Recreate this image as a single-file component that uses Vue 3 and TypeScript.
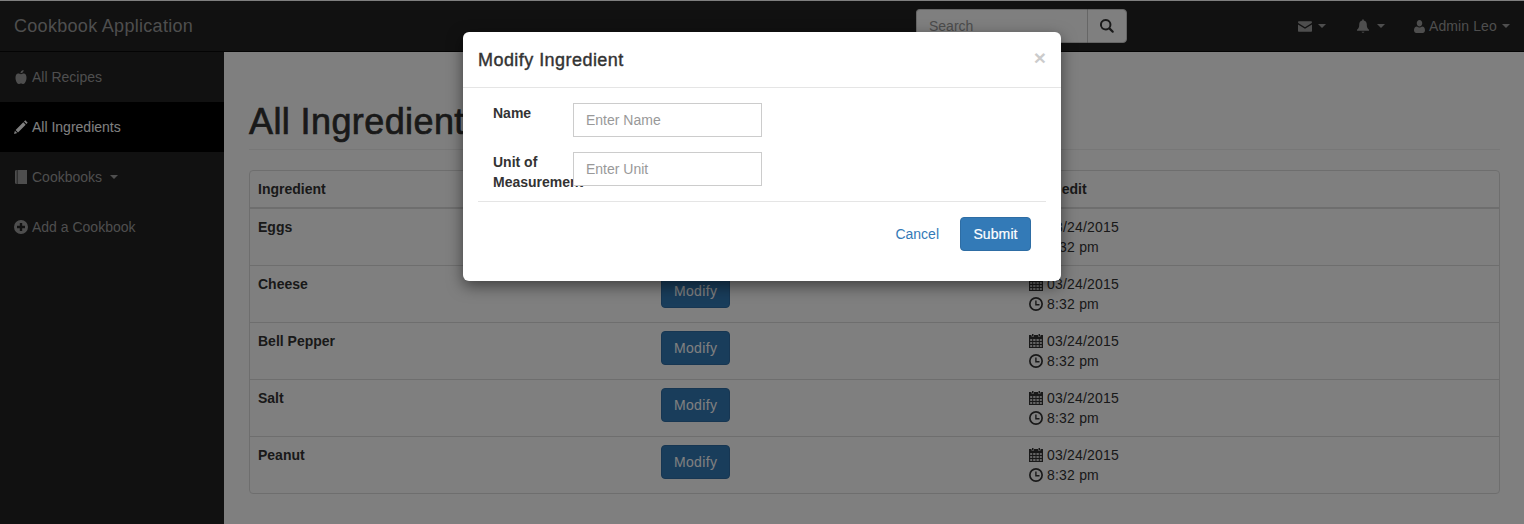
<template>
  <div class="page">
    <nav class="navbar">
      <a class="brand">Cookbook Application</a>
      <div class="search">
        <input class="search-input" placeholder="Search" />
        <button class="search-btn">
          <svg class="ic search-ic" viewBox="0 0 16 16"><path :d="icons.search" /></svg>
        </button>
      </div>
      <ul class="top-links">
        <li class="envelope-link">
          <svg class="ic env" viewBox="0 0 16 14"><path :d="icons.envelope" /></svg><span class="caret"></span>
        </li>
        <li class="bell-link">
          <svg class="ic bell" viewBox="0 0 14 16"><path :d="icons.bell" /></svg><span class="caret"></span>
        </li>
        <li class="user-link">
          <svg class="ic user" viewBox="0 0 12 14"><path :d="icons.user" /></svg>
          <span class="user-name">Admin Leo</span><span class="caret"></span>
        </li>
      </ul>
    </nav>

    <div class="layout">
      <aside class="sidebar">
        <a v-for="item in sideItems" :key="item.label" class="side-item" :class="{ active: item.active }">
          <svg class="ic side-ic" viewBox="0 0 14 14"><path :d="item.path" /></svg>
          <span>{{ item.label }}</span>
          <span v-if="item.dropdown" class="caret side-caret"></span>
        </a>
      </aside>

      <main class="content">
        <h1 class="page-title">All Ingredients</h1>
        <div class="panel">
          <table class="table">
            <colgroup>
              <col class="col-name" />
              <col class="col-action" />
              <col />
            </colgroup>
            <thead>
              <tr>
                <th>Ingredient</th>
                <th></th>
                <th>Last edit</th>
              </tr>
            </thead>
            <tbody>
              <tr v-for="name in ingredients" :key="name">
                <td><strong>{{ name }}</strong></td>
                <td><button class="btn btn-primary">Modify</button></td>
                <td>
                  <div class="stamp">
                    <svg class="ic stamp-ic" viewBox="0 0 14 14"><path :d="icons.calendar" /></svg>03/24/2015
                  </div>
                  <div class="stamp">
                    <svg class="ic stamp-ic" viewBox="0 0 14 14"><path :d="icons.clock" /></svg>8:32 pm
                  </div>
                </td>
              </tr>
            </tbody>
          </table>
        </div>
      </main>
    </div>

    <div class="backdrop"></div>

    <div class="modal">
      <div class="modal-header">
        <h4>Modify Ingredient</h4>
        <span class="close">×</span>
      </div>
      <form class="modal-form" @submit.prevent>
        <div class="form-row">
          <label>Name</label>
          <input class="field" placeholder="Enter Name" />
        </div>
        <div class="form-row">
          <label>Unit of Measurement</label>
          <input class="field" placeholder="Enter Unit" />
        </div>
      </form>
      <div class="modal-footer">
        <a class="cancel">Cancel</a>
        <button class="btn btn-primary">Submit</button>
      </div>
    </div>
  </div>
</template>

<script setup lang="ts">
const icons = {
  search: 'M6.5 0a6.5 6.5 0 1 0 3.6 11.9l3.6 3.6a1.3 1.3 0 0 0 1.8-1.8l-3.6-3.6A6.5 6.5 0 0 0 6.5 0zm0 2.2a4.3 4.3 0 1 1 0 8.6 4.3 4.3 0 0 1 0-8.6z',
  envelope: 'M1.2 1h13.6c.6 0 1.2.5 1.2 1.1 0 .5-.3.9-.7 1.2L8 7.8.7 3.3C.3 3 0 2.6 0 2.1 0 1.5.6 1 1.2 1zM0 4.6l8 5 8-5v7.2c0 .7-.5 1.2-1.2 1.2H1.2C.5 13 0 12.5 0 11.8z',
  bell: 'M7 0c.5 0 .9.4.9.9v.6c2.2.4 3.5 2.2 3.5 4.5 0 3.3.6 5 2.6 6.5v1H0v-1c2-1.5 2.6-3.2 2.6-6.5 0-2.3 1.3-4.1 3.5-4.5V.9C6.1.4 6.5 0 7 0zM5.2 14.7h3.6A1.9 1.9 0 0 1 7 16a1.9 1.9 0 0 1-1.8-1.3z',
  user: 'M6 0c1.7 0 3 1.5 3 3.4S7.7 7 6 7 3 5.3 3 3.4 4.3 0 6 0zM3.3 7c.7.6 1.7 1 2.7 1s2-.4 2.7-1c2.100.2 3.300 1.500 3.300 4.200 0 1.800-1.100 2.800-2.500 2.800h-7C1.100 14 0 13 0 11.200 0 8.500 1.200 7.200 3.300 7z',
  calendar: 'M3 0h1.500v2H3zM9.500 0H11v2H9.500zM0 1h2.500v1.500h2.500V1h4v1.500h2.500V1H14v13H0zM1.200 5.200v1.600h2V5.200zm3 0v1.600h2.300V5.200zm3.300 0v1.600h2.300V5.200zm3.300 0v1.600h2V5.200zM1.200 8.200v1.600h2V8.200zm3 0v1.600h2.300V8.200zm3.300 0v1.600h2.300V8.200zm3.300 0v1.600h2V8.200zM1.200 11.200v1.600h2v-1.600zm3 0v1.600h2.300v-1.600zm3.300 0v1.600h2.300v-1.600zm3.300 0v1.600h2v-1.600z',
  clock: 'M7 0a7 7 0 1 1 0 14A7 7 0 0 1 7 0zm0 1.700a5.300 5.300 0 1 0 0 10.600A5.300 5.300 0 0 0 7 1.700zM6.200 3.500h1.400v3.600h2.900v1.400H6.200z',
}

interface SideItem {
  label: string
  path: string
  active?: boolean
  dropdown?: boolean
}

const sideItems: SideItem[] = [
  {
    label: 'All Recipes',
    path: 'M6.500 3.300C6.400 1.700 7.400.3 9.600 0c.1 1.700-1 3-3.100 3.300zM4.200 3.600c1 0 1.800.6 2.800.6s1.800-.6 2.800-.6c1.800 0 2.700 1.900 2.700 4.200 0 3-1.700 6.200-3.200 6.200-.9 0-1.300-.5-2.300-.5s-1.400.5-2.300.5C3.200 14 1.500 10.800 1.500 7.800c0-2.300.9-4.200 2.700-4.200z',
  },
  {
    label: 'All Ingredients',
    active: true,
    path: 'M11.300.3l2.400 2.400-1.300 1.300L10 1.600zM9.300 2.300l2.400 2.400-7.700 7.700-2.400-2.400zM.9 10.800l2.300 2.300L0 14z',
  },
  {
    label: 'Cookbooks',
    dropdown: true,
    path: 'M3.500 0H13v14H3.500zM1 1.500C1 .6 1.600 0 2.500 0h.3v14h-.3C1.600 14 1 13.400 1 12.500z',
  },
  {
    label: 'Add a Cookbook',
    path: 'M7 0a7 7 0 1 1 0 14A7 7 0 0 1 7 0zM5.800 3v2.800H3v2.400h2.800V11h2.400V8.200H11V5.800H8.200V3z',
  },
]

const ingredients: string[] = ['Eggs', 'Cheese', 'Bell Pepper', 'Salt', 'Peanut']
</script>

<style>
html,
body {
  margin: 0;
  overflow: hidden;
}
</style>

<style scoped>
* {
  box-sizing: border-box;
}

.page {
  position: relative;
  width: 1524px;
  height: 524px;
  overflow: hidden;
  padding-top: 1px;
  background: #fff;
  font-family: "Liberation Sans", Arial, sans-serif;
  font-size: 14px;
  line-height: 20px;
  color: #333;
}

.ic {
  display: inline-block;
  fill: currentColor;
  flex: none;
}

.navbar {
  display: flex;
  align-items: center;
  height: 51px;
  background: #222;
  border-bottom: 1px solid #080808;
}

.brand {
  width: 916px;
  padding-left: 14px;
  font-size: 18px;
  letter-spacing: 0.3px;
  color: #9d9d9d;
}

.search {
  display: flex;
  width: 211px;
  height: 34px;
}

.search-input {
  width: 171px;
  height: 34px;
  padding: 6px 12px;
  border: 1px solid #ccc;
  border-right: 0;
  border-radius: 4px 0 0 4px;
  background: #fff;
  font: inherit;
  outline: none;
}

.search-input::placeholder,
.field::placeholder {
  color: #999;
  opacity: 1;
}

.search-btn {
  display: flex;
  align-items: center;
  justify-content: center;
  width: 40px;
  height: 34px;
  padding: 0;
  border: 1px solid #ccc;
  border-radius: 0 4px 4px 0;
  background: #fff;
  color: #333;
}

.search-ic {
  width: 14px;
  height: 14px;
}

.top-links {
  display: flex;
  align-items: center;
  margin: 0;
  padding: 0;
  list-style: none;
  color: #9d9d9d;
}

.top-links li {
  display: flex;
  align-items: center;
}

.envelope-link {
  margin-left: 171px;
}

.bell-link {
  margin-left: 31px;
}

.bell-link .caret {
  margin-left: 8px;
}

.user-link {
  margin-left: 29px;
}

.user-link .caret {
  margin-left: 5px;
}

.user-name {
  letter-spacing: 0.1px;
}

.env {
  width: 14px;
  height: 13px;
}

.bell {
  width: 12px;
  height: 14px;
}

.user {
  width: 11px;
  height: 13px;
  margin-right: 4px;
}

.caret {
  display: inline-block;
  width: 0;
  height: 0;
  margin-left: 6px;
  border-top: 4px solid currentColor;
  border-right: 4px solid transparent;
  border-left: 4px solid transparent;
}

.layout {
  display: flex;
  height: 472px;
}

.sidebar {
  width: 224px;
  background: #222;
  flex: none;
}

.side-item {
  display: flex;
  align-items: center;
  height: 50px;
  padding-left: 14px;
  color: #9d9d9d;
}

.side-item.active {
  background: #000;
  color: #fff;
}

.side-ic {
  width: 14px;
  height: 14px;
  margin-right: 4px;
}

.side-caret {
  margin-left: 8px;
}

.content {
  flex: 1;
  padding: 50px 24px 0 25px;
}

.page-title {
  margin: 0 0 20px;
  padding-bottom: 7px;
  border-bottom: 1px solid #eee;
  font-size: 36px;
  font-weight: 400;
  line-height: 40px;
  letter-spacing: 0.4px;
  -webkit-text-stroke: 0.7px currentColor;
  color: #333;
}

.panel {
  border: 1px solid #ddd;
  border-radius: 4px;
  background: #fff;
}

.table {
  width: 100%;
  border-collapse: collapse;
  table-layout: fixed;
}

.col-name {
  width: 403px;
}

.col-action {
  width: 368px;
}

.table th,
.table td {
  padding: 8px;
  text-align: left;
  vertical-align: top;
}

.table th {
  border-bottom: 2px solid #ddd;
}

.table td {
  border-top: 1px solid #ddd;
}

.table tbody tr:first-child td {
  border-top: 0;
}

.stamp {
  display: flex;
  align-items: center;
  height: 20px;
  letter-spacing: 0.2px;
}

.stamp-ic {
  width: 14px;
  height: 14px;
  margin-right: 4px;
}

.btn {
  height: 34px;
  padding: 6px 12px;
  border: 1px solid transparent;
  border-radius: 4px;
  font: inherit;
  letter-spacing: 0.33px;
}

.btn-primary {
  background: #337ab7;
  border-color: #2e6da4;
  color: #fff;
}

.backdrop {
  position: absolute;
  inset: 0;
  background: rgba(0, 0, 0, 0.5);
}

.modal {
  position: absolute;
  top: 32px;
  left: 463px;
  width: 598px;
  height: 249px;
  background: #fff;
  border-radius: 6px;
  box-shadow: 0 5px 15px rgba(0, 0, 0, 0.5);
}

.modal-header {
  display: flex;
  align-items: center;
  justify-content: space-between;
  height: 56px;
  padding: 0 15px;
  border-bottom: 1px solid #e5e5e5;
}

.modal-header h4 {
  margin: 0;
  font-size: 18px;
  font-weight: 400;
  line-height: 20px;
  letter-spacing: 0.45px;
  -webkit-text-stroke: 0.4px currentColor;
  color: #333;
}

.close {
  margin-bottom: 4px;
  font-size: 21px;
  font-weight: 700;
  color: #000;
  opacity: 0.2;
}

.modal-form {
  display: flex;
  flex-direction: column;
  gap: 15px;
  margin: 15px 15px 0;
  padding: 0 15px 15px;
  border-bottom: 1px solid #e5e5e5;
}

.form-row {
  display: flex;
  height: 34px;
}

.form-row label {
  width: 80px;
  flex: none;
  font-weight: 700;
}

.field {
  width: 189px;
  height: 34px;
  padding: 6px 12px;
  border: 1px solid #ccc;
  background: #fff;
  font: inherit;
  outline: none;
}

.modal-footer {
  display: flex;
  align-items: center;
  justify-content: flex-end;
  gap: 21px;
  padding: 15px 30px 0 0;
}

.modal-footer .btn {
  width: 71px;
  padding: 6px 0;
  letter-spacing: 0.1px;
  -webkit-text-stroke: 0.2px currentColor;
}

.cancel {
  color: #337ab7;
}
</style>
